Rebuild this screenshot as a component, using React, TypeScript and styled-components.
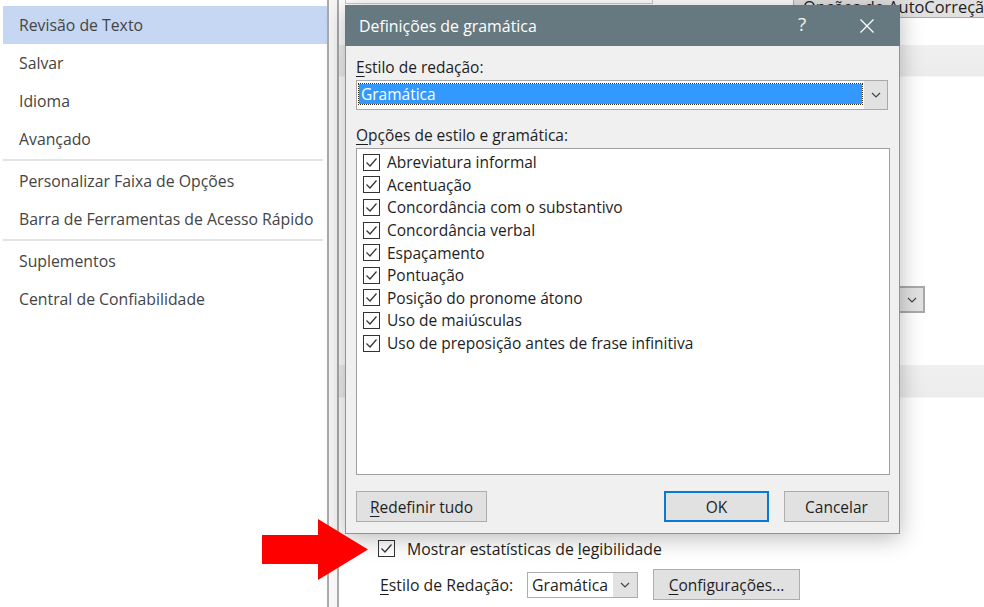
import React from "react";
import styled, { createGlobalStyle } from "styled-components";

const Global = createGlobalStyle`
  html, body { margin: 0; padding: 0; }
  body {
    width: 984px; height: 607px; overflow: hidden; background: #fff;
    font-family: "Open Sans", "Noto Sans", sans-serif;
  }
  * { box-sizing: border-box; }
`;

const Screen = styled.div`
  position: relative;
  width: 984px;
  height: 607px;
  overflow: hidden;
  display: flex;
  background: #fff;
`;

const Sidebar = styled.nav`
  width: 327px;
  flex: none;
  padding-top: 6px;
  display: flex;
  flex-direction: column;
`;

const NavItem = styled.div<{ $active?: boolean }>`
  height: 38px;
  display: flex;
  align-items: center;
  margin-left: 3px;
  padding-left: 16px;
  background: ${(p) => (p.$active ? "#c5d7f3" : "transparent")};
  font-size: 15.8px;
  color: #444;
  white-space: nowrap;
`;

const NavSep = styled.div`
  height: 4px;
  display: flex;
  align-items: center;
  padding: 0 4px 0 3px;
  &::after {
    content: "";
    flex: 1;
    height: 2px;
    background: #e3e3e3;
  }
`;

const Divider = styled.div`
  width: 12px;
  flex: none;
  border-left: 2px solid #ababab;
  border-right: 2px solid #ababab;
  background: #f7f7f7;
`;

const Main = styled.main`
  flex: 1;
  display: flex;
  flex-direction: column;
  min-width: 0;
`;

const TopStrip = styled.div`
  height: 18px;
  display: flex;
  align-items: flex-end;
  overflow: hidden;
  flex: none;
`;

const FieldBox = styled.div`
  margin-left: 6px;
  margin-bottom: 14px;
  width: 308px;
  height: 20px;
  flex: none;
  border: 1px solid #c9c9c9;
`;

const AutoButton = styled.div`
  margin-left: 140px;
  width: 220px;
  height: 30px;
  flex: none;
  display: flex;
  align-items: flex-end;
  padding: 0 0 1px 9px;
  background: #e1e1e1;
  border: 1px solid #adadad;
  font-size: 16.4px;
  line-height: 18px;
  color: #1e1e1e;
  white-space: nowrap;
`;

const Band = styled.div<{ $top: number; $h: number }>`
  margin-top: ${(p) => p.$top}px;
  height: ${(p) => p.$h}px;
  flex: none;
  background: linear-gradient(#f0f0f0, #ececec);
  border-bottom: 1px solid #f6f6f6;
`;

const BgComboRow = styled.div`
  margin-top: 209px;
  height: 27px;
  flex: none;
  display: flex;
  justify-content: flex-end;
  padding-right: 59px;
`;

const BgCombo = styled.div`
  width: 220px;
  height: 27px;
  display: flex;
  justify-content: flex-end;
  border: 2px solid #a9a9a9;
  background: #fff;
`;

const DropPart = styled.div<{ $w: number }>`
  width: ${(p) => p.$w}px;
  flex: none;
  display: flex;
  align-items: center;
  justify-content: center;
  background: #e2e2e2;
`;

const CheckRow = styled.div`
  margin-top: 142px;
  height: 17px;
  flex: none;
  display: flex;
  align-items: center;
  padding-left: 39px;
  gap: 12px;
  font-size: 15.8px;
  color: #1e1e1e;
  white-space: nowrap;
`;

const StyleRow = styled.div`
  margin-top: 12px;
  height: 31px;
  flex: none;
  display: flex;
  align-items: center;
  padding-left: 41px;
  font-size: 15.8px;
  color: #1e1e1e;
  white-space: nowrap;
`;

const StyleLabel = styled.span`
  width: 147px;
  flex: none;
`;

const SmallCombo = styled.div`
  width: 111px;
  height: 26px;
  flex: none;
  display: flex;
  border: 1px solid #acacac;
  background: #fff;
`;

const SmallComboText = styled.span`
  flex: 1;
  padding-left: 4px;
  line-height: 24px;
`;

const Button = styled.div<{ $w: number; $default?: boolean }>`
  width: ${(p) => p.$w}px;
  height: 31px;
  flex: none;
  display: flex;
  align-items: center;
  justify-content: center;
  background: #e1e1e1;
  border: ${(p) => (p.$default ? "2px solid #0a78d7" : "1px solid #adadad")};
  font-size: 15.5px;
  color: #1e1e1e;
  white-space: nowrap;
`;

const Mn = styled.u`
  text-decoration: underline;
  text-decoration-thickness: 1px;
  text-underline-offset: 3px;
`;

/* Dialog */
const Dialog = styled.section`
  position: absolute;
  left: 345px;
  top: 5px;
  width: 555px;
  height: 529px;
  display: flex;
  flex-direction: column;
  background: #f0f0f0;
  border: 1px solid #8d9599;
  border-top: none;
  box-shadow: 0 4px 22px rgba(0, 0, 0, 0.28);
`;

const TitleBar = styled.header`
  height: 41px;
  flex: none;
  margin: 0 -1px;
  display: flex;
  align-items: center;
  background: #677980;
  color: #fff;
  padding-left: 14px;
`;

const TitleText = styled.span`
  flex: 1;
  font-size: 15.9px;
  white-space: nowrap;
`;

const HelpGlyph = styled.span`
  width: 30px;
  text-align: center;
  font-size: 19px;
  color: #f2f2f2;
  line-height: 1;
  margin-top: -2px;
`;

const CloseBtn = styled.span`
  width: 46px;
  margin-left: 27px;
  margin-right: 10px;
  display: flex;
  align-items: center;
  justify-content: center;
`;

const DialogBody = styled.div`
  flex: 1;
  display: flex;
  flex-direction: column;
  padding: 0 10px;
  font-size: 15.5px;
  color: #1e1e1e;
`;

const Label = styled.div<{ $top: number }>`
  margin-top: ${(p) => p.$top}px;
  height: 20px;
  line-height: 20px;
  white-space: nowrap;
`;

const Combo = styled.div`
  margin-top: 3px;
  height: 30px;
  flex: none;
  display: flex;
  border: 1px solid #a9a9a9;
  background: #fff;
  margin-right: 1px;
`;

const ComboField = styled.div`
  flex: 1;
  padding: 3px 2px 5px 2px;
  display: flex;
`;

const Selection = styled.div`
  flex: 1;
  background: #3399ff;
  outline: 1px dotted #3a2a10;
  color: #fff;
  line-height: 20px;
  padding-left: 2px;
`;

const ListBox = styled.div`
  margin-top: 3px;
  height: 327px;
  flex: none;
  background: #fff;
  border: 1px solid #a0a0a0;
  padding: 2px 0 0 6px;
  display: flex;
  flex-direction: column;
  margin-right: -1px;
`;

const ListRow = styled.div`
  height: 22.6px;
  display: flex;
  align-items: center;
  gap: 7px;
  white-space: nowrap;
`;

const ButtonRow = styled.div`
  margin-top: 16px;
  display: flex;
  align-items: center;
  gap: 15px;
`;

const CheckBoxBox = styled.span`
  width: 17px;
  height: 17px;
  flex: none;
  border: 1px solid #333;
  background: #fff;
  display: flex;
`;

const Arrow = styled.svg`
  position: absolute;
  left: 262px;
  top: 519px;
`;

const Check = () => (
  <CheckBoxBox>
    <svg width="15" height="15" viewBox="0 0 15 15">
      <path d="M2.5 7.5 L6 11 L12.5 3.5" fill="none" stroke="#333" strokeWidth="1.2" />
    </svg>
  </CheckBoxBox>
);

const Chevron = ({ color = "#444" }: { color?: string }) => (
  <svg width="10" height="6" viewBox="0 0 10 6">
    <path d="M1 1 L5 5 L9 1" fill="none" stroke={color} strokeWidth="1.2" />
  </svg>
);

const navTop = ["Revisão de Texto", "Salvar", "Idioma", "Avançado"];
const navMid = ["Personalizar Faixa de Opções", "Barra de Ferramentas de Acesso Rápido"];
const navBot = ["Suplementos", "Central de Confiabilidade"];

const options = [
  "Abreviatura informal",
  "Acentuação",
  "Concordância com o substantivo",
  "Concordância verbal",
  "Espaçamento",
  "Pontuação",
  "Posição do pronome átono",
  "Uso de maiúsculas",
  "Uso de preposição antes de frase infinitiva",
];

export default function App() {
  return (
    <Screen>
      <Global />
      <Sidebar>
        {navTop.map((n, i) => (
          <NavItem key={n} $active={i === 0}>
            {n}
          </NavItem>
        ))}
        <NavSep />
        {navMid.map((n) => (
          <NavItem key={n}>{n}</NavItem>
        ))}
        <NavSep />
        {navBot.map((n) => (
          <NavItem key={n}>{n}</NavItem>
        ))}
      </Sidebar>
      <Divider />
      <Main>
        <TopStrip>
          <FieldBox />
          <AutoButton>Opções de AutoCorreção</AutoButton>
        </TopStrip>
        <Band $top={27} $h={32} />
        <BgComboRow>
          <BgCombo>
            <DropPart $w={23}>
              <Chevron />
            </DropPart>
          </BgCombo>
        </BgComboRow>
        <Band $top={52} $h={33} />
        <CheckRow>
          <Check />
          <span>
            Mostrar estatísticas de <Mn>l</Mn>egibilidade
          </span>
        </CheckRow>
        <StyleRow>
          <StyleLabel>
            <Mn>E</Mn>stilo de Redação:
          </StyleLabel>
          <SmallCombo>
            <SmallComboText>Gramática</SmallComboText>
            <DropPart $w={24}>
              <Chevron />
            </DropPart>
          </SmallCombo>
          <Button $w={147} style={{ marginLeft: 15 }}>
            <span>
              <Mn>C</Mn>onfigurações...
            </span>
          </Button>
        </StyleRow>
      </Main>

      <Dialog>
        <TitleBar>
          <TitleText>Definições de gramática</TitleText>
          <HelpGlyph>?</HelpGlyph>
          <CloseBtn>
            <svg width="14" height="14" viewBox="0 0 14 14">
              <path d="M0.5 0.5 L13.5 13.5 M13.5 0.5 L0.5 13.5" stroke="#fff" strokeWidth="1.3" />
            </svg>
          </CloseBtn>
        </TitleBar>
        <DialogBody>
          <Label $top={11}>
            <Mn>E</Mn>stilo de redação:
          </Label>
          <Combo>
            <ComboField>
              <Selection>Gramática</Selection>
            </ComboField>
            <DropPart $w={23}>
              <Chevron />
            </DropPart>
          </Combo>
          <Label $top={15}>
            <Mn>O</Mn>pções de estilo e gramática:
          </Label>
          <ListBox>
            {options.map((o) => (
              <ListRow key={o}>
                <Check />
                <span>{o}</span>
              </ListRow>
            ))}
          </ListBox>
          <ButtonRow>
            <Button $w={131}>
              <span>
                <Mn>R</Mn>edefinir tudo
              </span>
            </Button>
            <Button $w={105} $default style={{ marginLeft: "auto" }}>
              OK
            </Button>
            <Button $w={105}>Cancelar</Button>
          </ButtonRow>
        </DialogBody>
      </Dialog>

      <Arrow width="107" height="62" viewBox="0 0 107 62">
        <polygon points="0,16 56,16 56,0 106,30.5 56,61 56,45 0,45" fill="#ff0000" />
      </Arrow>
    </Screen>
  );
}
